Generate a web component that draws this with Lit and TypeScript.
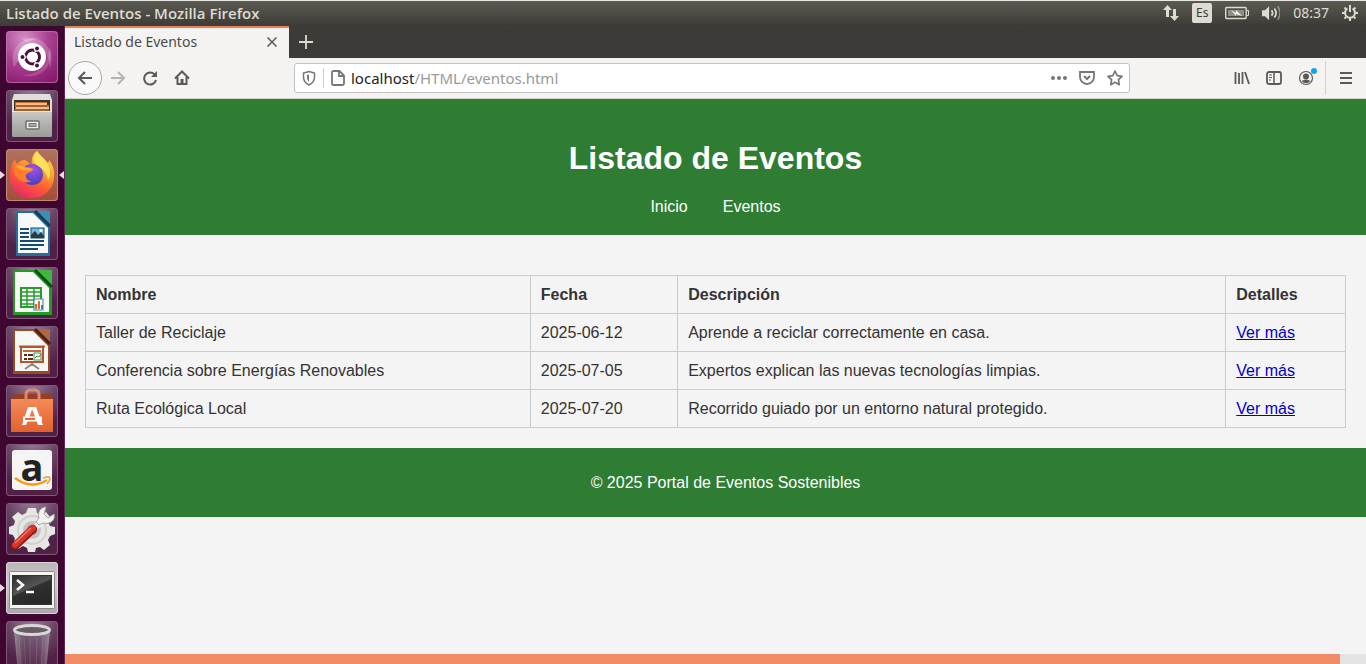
import { LitElement, html, svg, css } from "lit";
import { customElement, property } from "lit/decorators.js";

const launcherArt: Record<string, unknown> = {
  dash: svg`
    <defs><radialGradient id="g" cx="35%" cy="15%" r="95%"><stop offset="0" stop-color="#d58fc6"/><stop offset=".5" stop-color="#a8408f"/><stop offset="1" stop-color="#8a1a70"/></radialGradient></defs>
    <rect width="52" height="52" rx="4" fill="url(#g)"/>
    <path d="M8 36C2 16 18 4 34 8C22 8 12 16 12 30Z" fill="#fff" opacity=".22"/>
    <path d="M16 8C36 2 50 18 44 38C44 22 34 12 22 12Z" fill="#fff" opacity=".2"/>
    <path d="M44 16C50 34 34 50 16 44C30 44 40 38 42 24Z" fill="#fff" opacity=".16"/>
    <circle cx="26" cy="26" r="14" fill="#fff"/>
    <circle cx="26.500" cy="26" r="7" fill="none" stroke="#4b1040" stroke-width="3"/>
    <g stroke="#fff" stroke-width="1.200"><path d="M26 26H14M26 26L33 14M26 26L33 38" stroke-width="1"/><circle cx="26.500" cy="26" r="5" fill="#fff" stroke="none"/><g fill="#4b1040"><circle cx="16.500" cy="26" r="2.600"/><circle cx="31" cy="17.500" r="2.600"/><circle cx="31" cy="34.500" r="2.600"/></g></g>
    <rect x=".5" y=".5" width="51" height="51" rx="4" fill="none" stroke="#c885ba" opacity=".6"/>`,
  files: svg`
    <defs><linearGradient id="f" x2="0" y2="1"><stop offset="0" stop-color="#c9c9c6"/><stop offset="1" stop-color="#9b9b97"/></linearGradient></defs>
    <path d="M8 4H44L46 10V22H6V10Z" fill="#dededb"/><rect x="8" y="10" width="36" height="14" fill="#443027"/>
    <path d="M9 12H41V15H43V22H9Z" fill="#c06c2f"/><path d="M10 14H41M10 18H43" stroke="#f3bf8e" stroke-width="2"/><path d="M10 16H41M10 20H43" stroke="#8e5227"/>
    <path d="M6 21H46V46Q46 47 44 47H8Q6 47 6 46Z" fill="url(#f)"/><path d="M6 21.500H46" stroke="#eee"/>
    <rect x="20" y="31" width="13" height="8" rx="1" fill="#eee" stroke="#6f6f6d" stroke-width="1.500"/><rect x="23" y="33.500" width="7" height="3" fill="#aaa" stroke="#777"/>`,
  firefox: svg`
    <defs><linearGradient id="o" x1=".85" y1="0" x2=".3" y2="1"><stop offset="0" stop-color="#ffe84b"/><stop offset=".35" stop-color="#ffa52c"/><stop offset=".65" stop-color="#ff5a35"/><stop offset="1" stop-color="#ea2a68"/></linearGradient><radialGradient id="p" cx="55%" cy="25%" r="70%"><stop offset="0" stop-color="#a04ff0"/><stop offset="1" stop-color="#4a45b8"/></radialGradient></defs>
    <path d="M31 2C34 7 39 10 42 14Q43 13 43 11C47 16 49 22 48 29C47 41 37 49 26 49C13 49 4 40 4 28C4 21 5 16 9 10Q9 13 11 15Q14 11 19 11L26 16C25 9 27 5 31 2Z" fill="url(#o)"/>
    <path d="M26 15C33 15 37 20 37 26C37 32 32 36 26 36C20 36 16 32 16 27C16 19 20 15 26 15Z" fill="url(#p)"/>
    <path d="M31 2C34 7 41 11 43 18C45 23 44 28 42 31C41 25 38 21 34 18C29 15 24 11 31 2Z" fill="#ffe05a"/>
    <path d="M8 17Q12 14 19 18C24 18 28 19 27 21C25 24 21 23 20 26C19 29 22 32 25 32C20 36 10 31 8 24Z" fill="#ff7c2c"/>
    <path d="M9 17Q15 15 20 19Q25 19 26 21Q20 22 16 21Z" fill="#ffaa3b"/>`,
  writer: svg`
    <path d="M10 3H33L44 15V48H10Z" fill="#21719c"/><path d="M29 3H44V17Z" fill="#3b8fb5"/><path d="M29 3L44 18" stroke="#153d55" stroke-width="3"/>
    <path d="M12 5H27L42 20V45H12Z" fill="#f7f8f8"/>
    <g stroke="#174c70" stroke-width="2"><path d="M14 21H23M14 25H23M14 29H23M14 33H38M14 37H38M14 41H32"/></g>
    <rect x="25" y="20" width="13" height="10" fill="#75b9df" stroke="#174c70"/><path d="M25 30V27L29 23L32 27L35 24L38 28V30Z" fill="#263e42"/><circle cx="35" cy="22.500" r="1.500" fill="#fff"/>`,
  calc: svg`
    <path d="M7 3H33L46 16V48H7Z" fill="#229c24"/><path d="M29 3H46V18Z" fill="#42b53e"/><path d="M29 3L46 20" stroke="#0f4f15" stroke-width="3"/>
    <path d="M9 5H27L43 21V45H9Z" fill="#f8f9f7"/>
    <rect x="15" y="21" width="20" height="19" fill="#fff" stroke="#249e2b" stroke-width="2"/><path d="M15 25H35M15 29H35M15 33H35M15 37H35M21 21V40M28 21V40" stroke="#249e2b" stroke-width="1.500"/>
    <rect x="28" y="32" width="9" height="11" fill="#fff" stroke="#3983a5"/><path d="M30 42V37M33 42V34" stroke="#da6d2b" stroke-width="2"/><path d="M36 42V38" stroke="#3678b5" stroke-width="2"/>`,
  impress: svg`
    <path d="M7 3H33L44 15V48H7Z" fill="#9a4a22"/><path d="M29 3H44V18Z" fill="#b0673e"/><path d="M29 3L44 18" stroke="#4c211a" stroke-width="3"/>
    <path d="M9 5H27L42 20V45H9Z" fill="#f7f7f5"/><rect x="15" y="21" width="22" height="15" fill="#fff" stroke="#b9532a" stroke-width="2"/>
    <path d="M17 25H35" stroke="#c9693e" stroke-width="2"/><path d="M18 29H21M18 33H21M22 29H27M22 33H27" stroke="#632814" stroke-width="2"/>
    <rect x="28" y="27" width="7" height="7" fill="#fff" stroke="#3f8b47"/><path d="M29 32L31 30L33 31L35 28" stroke="#329140" fill="none"/><path d="M13 20.500H39" stroke="#b9532a" stroke-width="2"/><path d="M26 37V40M26 38L19 43M26 38L33 43" stroke="#888" stroke-width="2"/>`,
  software: svg`
    <defs><linearGradient id="b" x2="0" y2="1"><stop stop-color="#f58a58"/><stop offset="1" stop-color="#e2622f"/></linearGradient></defs>
    <path d="M5 14L9 9H45L47 14Z" fill="#963d22"/><path d="M5 14H47V47H5Z" fill="url(#b)"/>
    <path d="M20 17V10Q20 5 24 5H29Q33 5 33 10V17" fill="none" stroke="#e08a6c" stroke-width="3"/>
    <path d="M22 22H30L37 40H32L26.500 25L20 40H16Z" fill="#fff"/><path d="M17 31.500H36V36.500H17Z" fill="#fff"/><path d="M19 33H29V35H19Z" fill="#f26b32"/><path d="M26 24.500L28 30H24Z" fill="#f07a48"/>`,
  settings: svg`
    <path d="M22 5H30L31 10L35 12L40 9L45 15L42 19L44 23L49 24V31L44 33L42 37L44 42L38 47L34 44L30 45L29 49H22L21 45L17 43L12 46L7 41L9 36L7 32L3 31V24L8 22L9 18L6 14L12 9L16 12L20 10Z" fill="#e6e6e2"/>
    <circle cx="26" cy="27" r="14" fill="none" stroke="#d0d0cd" stroke-width="2"/><circle cx="26" cy="27" r="9" fill="#c6bfc4"/><circle cx="26" cy="27" r="5" fill="#7e6479"/>
    <path d="M22 32L36 18" stroke="#f2f2f0" stroke-width="6"/><path d="M33 15C31 9 35 4 40 4L38 11L42 15L48 11C50 17 44 22 37 20L33 22L30 19Z" fill="#f2f2f0" stroke="#a5a5a2"/>
    <path d="M9 43L27 26" stroke="#931713" stroke-width="8" stroke-linecap="round"/><path d="M9 42L27 25" stroke="#d93427" stroke-width="6" stroke-linecap="round"/><path d="M9 40L25 25" stroke="#f57764" stroke-width="1.500"/>`,
  terminal: svg`
    <defs><linearGradient id="t" x2=".6" y2="1"><stop stop-color="#2c2c2c"/><stop offset=".5" stop-color="#555"/><stop offset=".55" stop-color="#303030"/><stop offset="1" stop-color="#282828"/></linearGradient></defs>
    <rect x="3.500" y="9.500" width="45" height="37" rx="1" fill="#f5f5f2" stroke="#888"/><rect x="6.500" y="13.500" width="39" height="29" fill="url(#t)" stroke="#333"/>
    <path d="M11 18L17 23L11 28M20 30H28" fill="none" stroke="#fff" stroke-width="2.500"/>`,
  trash: svg`
    <defs><linearGradient id="r"><stop stop-color="#ddd" stop-opacity=".5"/><stop offset=".3" stop-color="#777" stop-opacity=".2"/><stop offset=".7" stop-color="#aaa" stop-opacity=".15"/><stop offset="1" stop-color="#ddd" stop-opacity=".5"/></linearGradient></defs>
    <path d="M8 9H44L40 52H12Z" fill="url(#r)"/><path d="M13 15L15 50M18 17L20 50M24 17V50M31 17L30 50M37 15L35 50" stroke="#c9b9c5" opacity=".2"/>
    <ellipse cx="26" cy="9" rx="17.500" ry="4.500" fill="#6a5a68" stroke="#d7d7d3" stroke-width="3"/>`,
};

interface LauncherEntry { id: string; label: string; running?: boolean; focused?: boolean; tone?: string }

const launcherEntries: LauncherEntry[] = [
  { id: "dash", label: "Buscar en su equipo" },
  { id: "files", label: "Archivos" },
  { id: "firefox", label: "Firefox", running: true, focused: true, tone: "copper" },
  { id: "writer", label: "LibreOffice Writer" },
  { id: "calc", label: "LibreOffice Calc" },
  { id: "impress", label: "LibreOffice Impress" },
  { id: "software", label: "Software de Ubuntu" },
  { id: "amazon", label: "Amazon" },
  { id: "settings", label: "Configuración del sistema" },
  { id: "terminal", label: "Terminal", running: true, tone: "silver" },
  { id: "trash", label: "Papelera" },
];

@customElement("launcher-tile")
class LauncherTile extends LitElement {
  @property({ attribute: false }) entry!: LauncherEntry;

  static styles = css`
    :host { display: flex; position: relative; flex: none; justify-content: center; }
    .tile { width: 52px; height: 52px; padding: 0; border: 0; border-radius: 4px; display: grid; place-items: center;
      background: radial-gradient(circle at 50% -10%, #a086a0 0, #694565 40%, #502047 75%); box-shadow: inset 0 0 0 1px #7d5878; }
    .copper { background: linear-gradient(#ae735e, #a54d3c); box-shadow: inset 0 0 0 1px #c28a78; }
    .silver { background: linear-gradient(#b7b4b7, #d0ccd0 40%, #aaa5aa); box-shadow: inset 0 0 0 1px #d8d4d8; }
    .art { display: block; width: 52px; height: 52px; }
    .amazon { display: grid; position: relative; width: 40px; height: 40px; border-radius: 3px; background: #f5f5f4; justify-items: center;
      font: bold 38px/32px "Open Sans", sans-serif; color: #222; }
    .smile { position: absolute; left: 0; top: 0; width: 40px; height: 40px; }
    .pip { position: absolute; top: 22px; width: 5px; height: 8px; background: #e4dce3; }
    .left { left: 0; clip-path: polygon(0 0, 100% 50%, 0 100%); }
    .right { right: 0; clip-path: polygon(100% 0, 0 50%, 100% 100%); }
  `;

  render() {
    const e = this.entry;
    return html`
      ${e.running ? html`<span class="pip left"></span>` : null}
      <button class="tile ${e.tone ?? ""}" aria-label=${e.label}>
        ${e.id === "amazon"
          ? html`<span class="amazon">a<svg class="smile" viewBox="0 0 40 40"><path d="M3 28Q19 40 35 30" fill="none" stroke="#f79a1c" stroke-width="2.500"/><path d="M31 28Q37 26 38 28Q38 31 35 34" fill="none" stroke="#f79a1c" stroke-width="1.500"/></svg></span>`
          : html`<svg class="art" viewBox="0 0 52 52">${launcherArt[e.id]}</svg>`}
      </button>
      ${e.focused ? html`<span class="pip right"></span>` : null}`;
  }
}

const glyphs: Record<string, unknown> = {
  close: svg`<path d="M3.500 3.500L12.500 12.500M12.500 3.500L3.500 12.500"/>`,
  plus: svg`<path d="M8 1V15M1 8H15" stroke-width="1.800"/>`,
  back: svg`<path d="M15 8H2M8 2L2 8L8 14" stroke-width="2"/>`,
  forward: svg`<path d="M1 8H14M8 2L14 8L8 14" stroke-width="2"/>`,
  reload: svg`<path d="M13 5A6 6 0 1 0 14 10" stroke-width="2"/><path d="M15 1V7H9Z" fill="currentColor" stroke="none"/>`,
  home: svg`<path d="M1 8.500L8 1.500L15 8.500M3.500 7V14H12.500V7" stroke-width="2"/><path d="M6.500 9H9.500V14H6.500Z" fill="currentColor" stroke="none"/>`,
  shield: svg`<path d="M8 1.500L13.500 3V7C13.500 11 11 13.500 8 15C5 13.500 2.500 11 2.500 7V3Z"/><path d="M8 4.500L6 5V8Q6 10 8 12Z" fill="currentColor" stroke="none"/>`,
  page: svg`<path d="M3.500 1H9.500L14 5.500V13.500Q14 15 12.500 15H3.500Q2 15 2 13.500V2.500Q2 1 3.500 1ZM9 1V6H14" stroke-width="1.800"/>`,
  dots: svg`<g fill="currentColor" stroke="none"><circle cx="2" cy="8" r="2"/><circle cx="8" cy="8" r="2"/><circle cx="14" cy="8" r="2"/></g>`,
  pocket: svg`<path d="M1 2H15V7A7 7 0 0 1 1 7Z" stroke-width="1.800"/><path d="M5 6L8 9L11 6" stroke-width="2"/>`,
  star: svg`<path d="M8 1L10.200 5.700L15 6.300L11.400 9.700L12.300 14.700L8 12.200L3.700 14.700L4.600 9.700L1 6.300L5.800 5.700Z" stroke-width="1.700" stroke-linejoin="round"/>`,
  library: svg`<path d="M1.500 2V14M5 3V14M8.500 2V14M11 2L15 14" stroke-width="1.800"/>`,
  sidebar: svg`<rect x="1" y="2" width="14" height="12" rx="2" stroke-width="1.800"/><path d="M8 2V14"/><path d="M3 5H6M3 7.500H6M3 10H5" stroke-width="1"/>`,
  account: svg`<circle cx="8" cy="8" r="6.500" stroke-width="1.200"/><g fill="currentColor" stroke="none"><circle cx="8" cy="6.500" r="3"/><path d="M3.500 11Q8 8 12.500 11Q8 15.500 3.500 11Z"/></g>`,
  menu: svg`<path d="M2 3H14M2 8H14M2 13H14" stroke-width="2"/>`,
  network: svg`<g fill="currentColor" stroke="none"><path d="M4.500 0L9 5H6V12H3V5H0Z"/><path d="M11.500 16L16 11H13V4H10V11H7Z"/></g>`,
  power: svg`<path d="M5.500 3.500A5 5 0 1 0 10.500 3.500" stroke-width="2"/><path d="M8 0V7M2.500 2.500L4 4M13.500 2.500L12 4M0 8H2.500M13.500 8H16M2.500 13.500L4 12M13.500 13.500L12 12M8 13V16" stroke-width="2"/>`,
  sound: svg`<path d="M0 5H3L7 1V15L3 11H0Z" fill="currentColor" stroke="none" transform="translate(0 1) scale(.9)"/><path d="M8.500 5.500Q10.500 8 8.500 10.500M11 4Q14 8 11 12"/><path d="M14 2Q18 8 14 14" opacity=".45"/>`,
};

const icon = (name: string, size = 16) => html`<svg width=${size} height=${size} viewBox="0 0 16 16" fill="none" stroke="currentColor" stroke-width="1.500" aria-hidden="true">${glyphs[name]}</svg>`;

@customElement("system-bar")
class SystemBar extends LitElement {
  static styles = css`
    :host { display: flex; justify-content: space-between; align-items: center; box-sizing: border-box; height: 26px; padding: 0 8px 2px 6px;
      border-top: 1px solid #e9e8e4; background: linear-gradient(#5b5a52, #3c3b37); color: #dfdbd2; font: 14px/20px "Noto Sans", sans-serif; }
    .title { font: 600 15px/20px "Open Sans", "Noto Sans", sans-serif; }
    .tray { display: flex; align-items: center; gap: 13px; }
    .lang { width: 20px; height: 20px; border-radius: 2px; background: #dfdbd2; color: #3c3b37; font-size: 12px; text-align: center; }
    svg { display: block; }
  `;
  render() {
    return html`
      <span class="title">Listado de Eventos - Mozilla Firefox</span>
      <div class="tray">
        ${icon("network")}
        <span class="lang">Es</span>
        <svg width="24" height="14" viewBox="0 0 24 14" fill="none" stroke="currentColor"><rect x=".7" y="1.500" width="20.500" height="11" rx="1" stroke-width="1.400"/><rect x="3" y="4" width="16" height="6" fill="#8f8d86" stroke="none"/><path d="M22 4.500H23.500V9.500H22"/><path d="M6 4L11 7V4L17 10L11 8V10Z" fill="#f2f0ea" stroke="none"/></svg>
        ${icon("sound", 18)}
        <time>08:37</time>
        ${icon("power")}
      </div>`;
  }
}

@customElement("browser-chrome")
class BrowserChrome extends LitElement {
  static styles = css`
    :host { display: block; font: 15px/20px "Noto Sans", sans-serif; color: #4a4a4a; }
    svg { display: block; }
    button { display: grid; place-items: center; flex: none; padding: 0; border: 0; background: none; color: #5a5a58; }
    .tabs { display: flex; height: 32px; background: #3c3b37; }
    .tab { display: flex; align-items: center; justify-content: space-between; box-sizing: border-box; width: 224px; padding: 0 9px 2px; border-top: 2px solid #ea7f55; background: #f4f3f2; font-size: 14px; }
    .add { width: 34px; color: #dcdad5; }
    .toolbar { display: flex; align-items: center; box-sizing: border-box; height: 41px; border-bottom: 1px solid #ccd3c8; background: #f4f3f2; }
    .nav { display: flex; align-items: center; flex: 0 0 229px; box-sizing: border-box; padding-left: 3px; }
    .nav button { width: 32px; height: 32px; }
    .nav .back { width: 34px; height: 34px; border: 1px solid #aaa9a6; border-radius: 50%; background: #faf9f9; }
    .nav .forward { color: #b5b4b2; }
    .address { display: flex; align-items: center; flex: 1; box-sizing: border-box; height: 30px; padding: 0 6px; border: 1px solid #c3c2c0; border-radius: 3px; background: #fff; }
    .address button { color: #777; }
    .address .page { width: 28px; height: 20px; margin-left: 6px; border-left: 1px solid #ccc; }
    .field { display: grid; flex: 1; align-items: center; }
    .field > * { grid-area: 1 / 1; font: 15px/20px "Noto Sans", sans-serif; }
    .url { width: 100%; box-sizing: border-box; padding: 0; border: 0; outline: 0; background: none; color: transparent; }
    .shown { pointer-events: none; color: #999; }
    .host { color: #222; }
    .actions { display: flex; gap: 12px; }
    .tools { display: flex; align-items: center; justify-content: flex-end; flex: 0 0 236px; }
    .tools button { width: 32px; height: 32px; position: relative; }
    .tools .menu { width: 41px; height: 34px; margin-left: 3px; border-left: 1px solid #d3d2d0; }
    .dot { position: absolute; right: 5px; top: 6px; width: 6px; height: 6px; border-radius: 50%; background: #12a5ee; }
  `;
  render() {
    return html`
      <div class="tabs">
        <div class="tab"><span>Listado de Eventos</span><button aria-label="Cerrar pestaña">${icon("close")}</button></div>
        <button class="add" aria-label="Nueva pestaña">${icon("plus")}</button>
      </div>
      <div class="toolbar">
        <div class="nav">
          <button class="back" aria-label="Atrás">${icon("back")}</button>
          <button class="forward" aria-label="Adelante">${icon("forward")}</button>
          <button aria-label="Recargar">${icon("reload")}</button>
          <button aria-label="Inicio">${icon("home")}</button>
        </div>
        <div class="address">
          <button aria-label="Protección">${icon("shield")}</button>
          <button class="page" aria-label="Información del sitio">${icon("page")}</button>
          <div class="field">
            <input class="url" aria-label="Dirección" />
            <span class="shown"><span class="host">localhost</span>/HTML/eventos.html</span>
          </div>
          <div class="actions">
            <button aria-label="Acciones">${icon("dots")}</button>
            <button aria-label="Pocket">${icon("pocket")}</button>
            <button aria-label="Marcador">${icon("star")}</button>
          </div>
        </div>
        <div class="tools">
          <button aria-label="Catálogo">${icon("library")}</button>
          <button aria-label="Barra lateral">${icon("sidebar")}</button>
          <button aria-label="Cuenta">${icon("account")}<span class="dot"></span></button>
          <button class="menu" aria-label="Menú">${icon("menu")}</button>
        </div>
      </div>`;
  }
}

const events = [
  ["Taller de Reciclaje", "2025-06-12", "Aprende a reciclar correctamente en casa."],
  ["Conferencia sobre Energías Renovables", "2025-07-05", "Expertos explican las nuevas tecnologías limpias."],
  ["Ruta Ecológica Local", "2025-07-20", "Recorrido guiado por un entorno natural protegido."],
];

@customElement("events-page")
class EventsPage extends LitElement {
  static styles = css`
    :host { display: block; background: #f4f4f4; color: #333; font: 16px/17px "Liberation Sans", Arial, sans-serif; }
    .banner, .footer { background: #2e7d32; color: #fff; text-align: center; }
    .banner { padding: 20px 20px 18px; }
    .heading { margin: 21px 0; font-size: 32px; line-height: 36px; }
    .links { display: flex; justify-content: center; gap: 35px; line-height: 20px; }
    .link { color: #fff; text-decoration: none; }
    .content { padding: 40px 20px 20px; }
    .table { width: 100%; border-collapse: collapse; }
    .table th, .table td { padding: 10px; border: 1px solid #ccc; text-align: left; }
    .name { width: 35.3%; }
    .date { width: 11.7%; }
    .text { width: 43.5%; }
    .more { width: 9.5%; }
    .detail { color: #0000cc; }
    .footer { width: 100%; padding: 26px 10px; }
    .note { margin: 0; }
  `;
  render() {
    return html`
      <header class="banner">
        <h1 class="heading">Listado de Eventos</h1>
        <nav class="links"><a class="link" href="#inicio">Inicio</a><a class="link" href="#eventos">Eventos</a></nav>
      </header>
      <main class="content">
        <table class="table">
          <thead><tr><th class="name">Nombre</th><th class="date">Fecha</th><th class="text">Descripción</th><th class="more">Detalles</th></tr></thead>
          <tbody>${events.map((row) => html`<tr>${row.map((cell) => html`<td>${cell}</td>`)}<td><a class="detail" href="#detalle">Ver más</a></td></tr>`)}</tbody>
        </table>
      </main>
      <footer class="footer"><p class="note">© 2025 Portal de Eventos Sostenibles</p></footer>`;
  }
}

@customElement("app-root")
class AppRoot extends LitElement {
  static styles = css`
    :host { display: flex; flex-direction: column; height: 100vh; overflow: hidden; background: #f4f4f4; }
    .desktop { display: flex; flex: 1; min-height: 0; }
    .launcher { display: flex; flex-direction: column; flex: 0 0 65px; gap: 7px; box-sizing: border-box; padding-top: 5px; border-right: 1px solid #5b2650; background: #3f0632; overflow: hidden; }
    .window { display: flex; flex-direction: column; flex: 1; min-width: 0; }
    .view { flex: 1; min-height: 0; overflow: hidden; }
    .scroll { flex: none; height: 10px; background: #e4e4e4; }
    .thumb { width: 98%; height: 100%; background: #f08d66; }
  `;
  render() {
    return html`
      <system-bar></system-bar>
      <div class="desktop">
        <nav class="launcher" aria-label="Lanzador">${launcherEntries.map((e) => html`<launcher-tile .entry=${e}></launcher-tile>`)}</nav>
        <div class="window">
          <browser-chrome></browser-chrome>
          <events-page class="view"></events-page>
          <div class="scroll"><div class="thumb"></div></div>
        </div>
      </div>`;
  }
}
